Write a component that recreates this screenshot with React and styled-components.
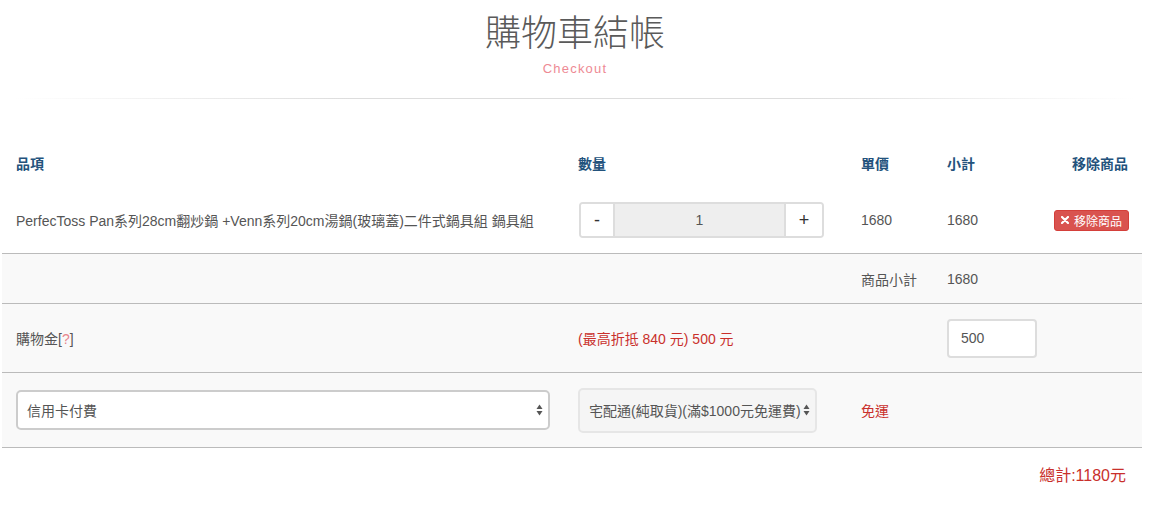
import React from "react";
import styled, { createGlobalStyle } from "styled-components";

const GlobalStyle = createGlobalStyle`
  body {
    margin: 0;
    background: #fff;
    font-family: "Liberation Sans", "Noto Sans CJK TC", sans-serif;
    color: #555;
  }
`;

const cols = "562px 283px 86px 107px 102px";

const App = () => {
  return (
    <Page>
      <GlobalStyle />
      <TitleBlock>
        <Title>購物車結帳</Title>
        <Subtitle>Checkout</Subtitle>
        <Divider />
      </TitleBlock>

      <Table>
        <HeadRow>
          <Cell>品項</Cell>
          <Cell>數量</Cell>
          <Cell>單價</Cell>
          <Cell>小計</Cell>
          <Cell $right>移除商品</Cell>
        </HeadRow>

        <ItemRow>
          <Cell>PerfecToss Pan系列28cm翻炒鍋 +Venn系列20cm湯鍋(玻璃蓋)二件式鍋具組 鍋具組</Cell>
          <Cell>
            <Qty>
              <QtyButton>-</QtyButton>
              <QtyValue>1</QtyValue>
              <QtyButton $plus>+</QtyButton>
            </Qty>
          </Cell>
          <Cell>1680</Cell>
          <Cell>1680</Cell>
          <Cell $right>
            <RemoveButton>
              <svg width="8" height="8" viewBox="0 0 8 8">
                <path d="M1 1 L7 7 M7 1 L1 7" stroke="#fff" strokeWidth="2.2" strokeLinecap="round" />
              </svg>
              移除商品
            </RemoveButton>
          </Cell>
        </ItemRow>

        <GrayRow $height={50}>
          <Cell />
          <Cell />
          <Cell>商品小計</Cell>
          <Cell>1680</Cell>
          <Cell />
        </GrayRow>

        <GrayRow $height={69}>
          <Cell>
            購物金[<Help>?</Help>]
          </Cell>
          <Cell>
            <RedText>(最高折抵 840 元) 500 元</RedText>
          </Cell>
          <Cell />
          <Cell>
            <CreditInput>500</CreditInput>
          </Cell>
          <Cell />
        </GrayRow>

        <GrayRow $height={76} $last>
          <Cell>
            <Select $wide>
              信用卡付費
              <Arrows />
            </Select>
          </Cell>
          <Cell>
            <Select>
              宅配通(純取貨)(滿$1000元免運費)
              <Arrows />
            </Select>
          </Cell>
          <Cell>
            <RedText>免運</RedText>
          </Cell>
          <Cell />
          <Cell />
        </GrayRow>
      </Table>

      <Total>總計:1180元</Total>
    </Page>
  );
};

const Arrows = () => (
  <ArrowIcon width="7" height="12" viewBox="0 0 7 12">
    <path d="M3.5 0.5 L6.5 5 L0.5 5 Z" fill="#555" />
    <path d="M3.5 11.5 L6.5 7 L0.5 7 Z" fill="#555" />
  </ArrowIcon>
);

export default App;

const Page = styled.div`
  width: 1150px;
  padding-top: 10px;
`;

const TitleBlock = styled.div`
  display: flex;
  flex-direction: column;
  align-items: center;
`;

const Title = styled.h1`
  margin: 0;
  font-family: "Noto Sans CJK TC", sans-serif;
  font-size: 36px;
  line-height: 40px;
  font-weight: 300;
  color: #5a5a5a;
`;

const Subtitle = styled.div`
  margin-top: 10px;
  font-size: 13px;
  line-height: 18px;
  color: #ee8a94;
  letter-spacing: 1.2px;
`;

const Divider = styled.div`
  margin-top: 20px;
  width: 1120px;
  height: 1px;
  background: linear-gradient(to right, rgba(221, 221, 221, 0), #ddd 30%, #ddd 70%, rgba(221, 221, 221, 0));
`;

const Table = styled.div`
  margin: 40px 0 0 2px;
  width: 1140px;
  font-size: 14px;
`;

const Row = styled.div`
  display: grid;
  grid-template-columns: ${cols};
  align-items: center;
  box-sizing: border-box;
`;

const HeadRow = styled(Row)`
  height: 48px;
  font-weight: bold;
  color: #23527c;
`;

const ItemRow = styled(Row)`
  height: 66px;
  color: #555;
`;

const GrayRow = styled(Row)`
  height: ${(p) => p.$height}px;
  background: #f9f9f9;
  border-top: 1px solid #bbb;
  border-bottom: ${(p) => (p.$last ? "1px solid #bbb" : "none")};
  color: #555;
`;

const Cell = styled.div`
  padding: 0 14px;
  text-align: ${(p) => (p.$right ? "right" : "left")};
  white-space: nowrap;
`;

const Qty = styled.div`
  display: flex;
  width: 245px;
  height: 36px;
  box-sizing: border-box;
  border: 2px solid #ddd;
  border-radius: 4px;
  overflow: hidden;
  margin-left: 1px;
`;

const QtyButton = styled.div`
  width: ${(p) => (p.$plus ? "36px" : "32px")};
  display: flex;
  align-items: center;
  justify-content: center;
  background: #fff;
  color: #333;
  font-size: 18px;
  border-left: ${(p) => (p.$plus ? "2px solid #ddd" : "none")};
  border-right: ${(p) => (p.$plus ? "none" : "2px solid #ddd")};
`;

const QtyValue = styled.div`
  flex: 1;
  display: flex;
  align-items: center;
  justify-content: center;
  background: #eee;
  color: #555;
  font-size: 14px;
`;

const RemoveButton = styled.span`
  display: inline-flex;
  align-items: center;
  gap: 5px;
  height: 21px;
  padding: 0 6px;
  box-sizing: border-box;
  background: #d9534f;
  border: 1px solid #d43f3a;
  border-radius: 3px;
  color: #fff;
  font-size: 12px;
`;

const Help = styled.span`
  color: #e8868c;
`;

const RedText = styled.span`
  color: #c9302c;
`;

const CreditInput = styled.div`
  width: 90px;
  height: 39px;
  box-sizing: border-box;
  display: flex;
  align-items: center;
  padding-left: 12px;
  background: #fff;
  border: 2px solid #ddd;
  border-radius: 4px;
  color: #555;
`;

const Select = styled.div`
  position: relative;
  display: flex;
  align-items: center;
  box-sizing: border-box;
  width: ${(p) => (p.$wide ? "534px" : "239px")};
  height: ${(p) => (p.$wide ? "40px" : "45px")};
  padding-left: 9px;
  background: ${(p) => (p.$wide ? "#fff" : "#f5f5f5")};
  border: 2px solid ${(p) => (p.$wide ? "#ccc" : "#e6e6e6")};
  border-radius: 5px;
  color: #555;
  font-size: 14px;
`;

const ArrowIcon = styled.svg`
  position: absolute;
  right: 5px;
  top: 50%;
  transform: translateY(-50%);
`;

const Total = styled.div`
  margin-top: 18px;
  width: 1126px;
  text-align: right;
  font-size: 16px;
  line-height: 20px;
  color: #c9302c;
`;
